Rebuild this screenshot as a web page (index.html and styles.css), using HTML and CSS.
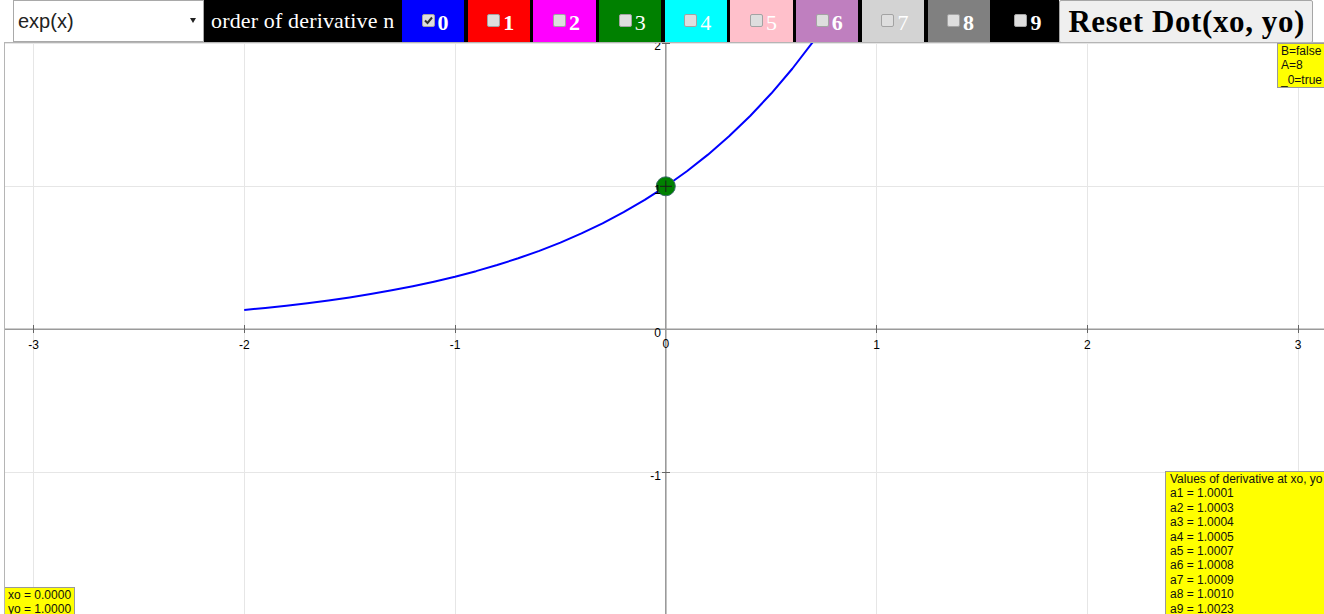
FILE: index.html
```html
<!DOCTYPE html>
<html lang="en">
<head>
<meta charset="utf-8">
<title>Derivatives of exp(x)</title>
<link rel="stylesheet" href="styles.css">
</head>
<body>
<header class="toolbar">
  <div class="fn-select">
    <select><option>exp(x)</option></select>
    <span class="caret"></span>
  </div>
  <div class="orders">
    <span class="order-label">order of derivative n</span>
    <label class="order o0"><span class="box"><svg viewBox="0 0 11 11" width="11" height="11"><path d="M2 5.5 L4.5 8 L9 2.5" /></svg></span><span class="num">0</span></label>
    <label class="order o1"><span class="box"></span><span class="num">1</span></label>
    <label class="order o2"><span class="box"></span><span class="num">2</span></label>
    <label class="order o3"><span class="box"></span><span class="num thin">3</span></label>
    <label class="order o4"><span class="box"></span><span class="num thin">4</span></label>
    <label class="order o5"><span class="box"></span><span class="num thin">5</span></label>
    <label class="order o6"><span class="box"></span><span class="num">6</span></label>
    <label class="order o7"><span class="box"></span><span class="num thin">7</span></label>
    <label class="order o8"><span class="box"></span><span class="num">8</span></label>
    <label class="order o9 wide"><span class="box"></span><span class="num">9</span></label>
  </div>
  <button class="reset">Reset Dot(xo, yo)</button>
</header>

<main class="board">
  <svg class="plot" viewBox="5 43 1330 580" width="1330" height="580">
    <g class="grid">
      <line x1="33.5" y1="43" x2="33.5" y2="623"/>
      <line x1="244.5" y1="43" x2="244.5" y2="623"/>
      <line x1="455.5" y1="43" x2="455.5" y2="623"/>
      <line x1="876.5" y1="43" x2="876.5" y2="623"/>
      <line x1="1087.5" y1="43" x2="1087.5" y2="623"/>
      <line x1="1298.5" y1="43" x2="1298.5" y2="623"/>
      <line x1="5" y1="43.5" x2="1335" y2="43.5"/>
      <line x1="5" y1="186.5" x2="1335" y2="186.5"/>
      <line x1="5" y1="472.5" x2="1335" y2="472.5"/>
      <line x1="5" y1="615.5" x2="1335" y2="615.5"/>
    </g>
    <g class="axis">
      <line x1="5" y1="329.3" x2="1335" y2="329.3"/>
      <line x1="665.8" y1="43" x2="665.8" y2="623"/>
    </g>
    <g class="ticks">
      <line x1="33.5" y1="325" x2="33.5" y2="333"/>
      <line x1="244.5" y1="325" x2="244.5" y2="333"/>
      <line x1="455.5" y1="325" x2="455.5" y2="333"/>
      <line x1="876.5" y1="325" x2="876.5" y2="333"/>
      <line x1="1087.5" y1="325" x2="1087.5" y2="333"/>
      <line x1="1298.5" y1="325" x2="1298.5" y2="333"/>
      <line x1="662" y1="43.5" x2="670" y2="43.5"/>
      <line x1="662" y1="186.5" x2="670" y2="186.5"/>
      <line x1="662" y1="472.5" x2="670" y2="472.5"/>
      <line x1="662" y1="615.5" x2="670" y2="615.5"/>
    </g>
    <path class="curve" d="M244.2 309.95 L265.28 307.91 L286.36 305.66 L307.44 303.18 L328.52 300.43 L349.6 297.39 L370.68 294.04 L391.76 290.33 L412.84 286.23 L433.92 281.7 L455 276.69 L476.08 271.16 L497.16 265.05 L518.24 258.29 L539.32 250.82 L560.4 242.57 L581.48 233.44 L602.56 223.36 L623.64 212.22 L644.72 199.91 L665.8 186.3 L686.88 171.26 L707.96 154.64 L729.04 136.27 L750.12 115.97 L771.2 93.53 L792.28 68.74 L813.36 41.33 L834.44 11.05"/>
    <g class="dot">
      <circle cx="665.8" cy="186.3" r="9.5"/>
      <line class="cross" x1="660" y1="186.3" x2="672" y2="186.3"/>
      <line class="cross" x1="665.8" y1="180.5" x2="665.8" y2="192"/>
    </g>
    <g class="labels">
      <text x="33.6" y="349" text-anchor="middle">-3</text>
      <text x="244.4" y="349" text-anchor="middle">-2</text>
      <text x="455.2" y="349" text-anchor="middle">-1</text>
      <text x="665.8" y="348" text-anchor="middle">0</text>
      <text x="876.6" y="349" text-anchor="middle">1</text>
      <text x="1087.4" y="349" text-anchor="middle">2</text>
      <text x="1298.2" y="349" text-anchor="middle">3</text>
      <text x="661" y="50" text-anchor="end">2</text>
      <text x="661" y="193.5" text-anchor="end">1</text>
      <text x="661" y="337" text-anchor="end">0</text>
      <text x="661" y="479.5" text-anchor="end">-1</text>
      <text x="661" y="622.5" text-anchor="end">-2</text>
    </g>
  </svg>

  <div class="note flags">B=false<br>A=8<br>_0=true</div>
  <div class="note values">Values of derivative at xo, yo<br>a1 = 1.0001<br>a2 = 1.0003<br>a3 = 1.0004<br>a4 = 1.0005<br>a5 = 1.0007<br>a6 = 1.0008<br>a7 = 1.0009<br>a8 = 1.0010<br>a9 = 1.0023</div>
  <div class="note coords">xo = 0.0000<br>yo = 1.0000</div>
</main>
</body>
</html>
```

FILE: styles.css
```css
* { box-sizing: border-box; }

html, body {
  margin: 0;
  padding: 0;
}

body {
  width: 1324px;
  height: 614px;
  overflow: hidden;
  background: #fff;
  font-family: "Liberation Sans", Arial, sans-serif;
}

/* ---------- toolbar ---------- */
.toolbar {
  display: flex;
  align-items: flex-start;
  height: 42px;
  padding-left: 13px;
}

.fn-select {
  position: relative;
  width: 191px;
  height: 42px;
  flex: none;
}

.fn-select select {
  -webkit-appearance: none;
  appearance: none;
  width: 100%;
  height: 100%;
  margin: 0;
  padding: 0 0 0 4px;
  border: 1px solid #a9a9a9;
  border-radius: 0;
  background: #fff;
  color: #222;
  font: 20px "Liberation Sans", Arial, sans-serif;
}

.fn-select .caret {
  position: absolute;
  right: 8px;
  top: 18px;
  width: 0;
  height: 0;
  border-left: 3px solid transparent;
  border-right: 3px solid transparent;
  border-top: 5px solid #222;
  pointer-events: none;
}

.orders {
  display: flex;
  gap: 3.5px;
  height: 42px;
  background: #000;
  flex: none;
}

.order-label {
  width: 194.5px;
  padding-left: 7px;
  color: #fff;
  font: 22px "Liberation Serif", "Times New Roman", serif;
  letter-spacing: 0.15px;
  line-height: 42px;
  white-space: nowrap;
}

.order {
  width: 62.2px;
  height: 42px;
  display: flex;
  align-items: center;
  justify-content: center;
  gap: 3px;
  padding-left: 4px;
  color: #fff;
  font: bold 22px "Liberation Serif", "Times New Roman", serif;
}

.order.wide { width: 65.5px; }

.o0 { background: #0000ff; }
.o1 { background: #ff0000; }
.o2 { background: #ff00ff; }
.o3 { background: #008000; }
.o4 { background: #00ffff; }
.o5 { background: #ffc0cb; }
.o6 { background: #bf7fbf; }
.o7 { background: #d3d3d3; }
.o8 { background: #808080; }
.o9 { background: #000000; }

.box {
  width: 13px;
  height: 13px;
  margin-top: -2px;
  border: 1px solid #a3a3a3;
  border-radius: 2px;
  background: #dedede;
  display: flex;
  align-items: center;
  justify-content: center;
  flex: none;
}

.box svg path {
  fill: none;
  stroke: #333;
  stroke-width: 2;
}

.num {
  line-height: 1;
  margin-top: 4px;
}

.num.thin { font-weight: normal; }

.reset {
  width: 254px;
  height: 43px;
  margin: 0;
  padding: 0 0 0 2px;
  border: 1px solid #a6a6a6;
  border-radius: 2px;
  background: #efefef;
  color: #000;
  font: bold 31px "Liberation Serif", "Times New Roman", serif;
  letter-spacing: 0.6px;
  white-space: nowrap;
  flex: none;
}

/* ---------- board ---------- */
.board {
  position: relative;
  margin-left: 4px;
  width: 1330px;
  height: 580px;
  border: 1px solid #b5b5b5;
  overflow: hidden;
  background: #fff;
}

.plot { display: block; }

.grid line { stroke: #e6e6e6; stroke-width: 1; }
.axis line { stroke: #9a9a9a; stroke-width: 1.6; }
.ticks line { stroke: #666; stroke-width: 1; }

.curve {
  fill: none;
  stroke: #0000ff;
  stroke-width: 2;
  stroke-linejoin: round;
}

.dot circle {
  fill: #008000;
  stroke: #3b6a6a;
  stroke-width: 1;
}

.dot .cross { stroke: #1a1a1a; stroke-width: 1; }

.labels text {
  font: 12px "Liberation Sans", Arial, sans-serif;
  fill: #000;
}

.note {
  position: absolute;
  background: #ffff00;
  border: 1px solid #999;
  color: #111;
  font: 12px "Liberation Sans", Arial, sans-serif;
  line-height: 14.4px;
  padding: 0 3px;
  white-space: nowrap;
}

.flags  { left: 1272px; top: 0; width: 60px; }
.values { left: 1160px; top: 428px; width: 172px; padding-left: 4px; }
.coords { left: -1px; top: 544px; width: 71px; }
```
